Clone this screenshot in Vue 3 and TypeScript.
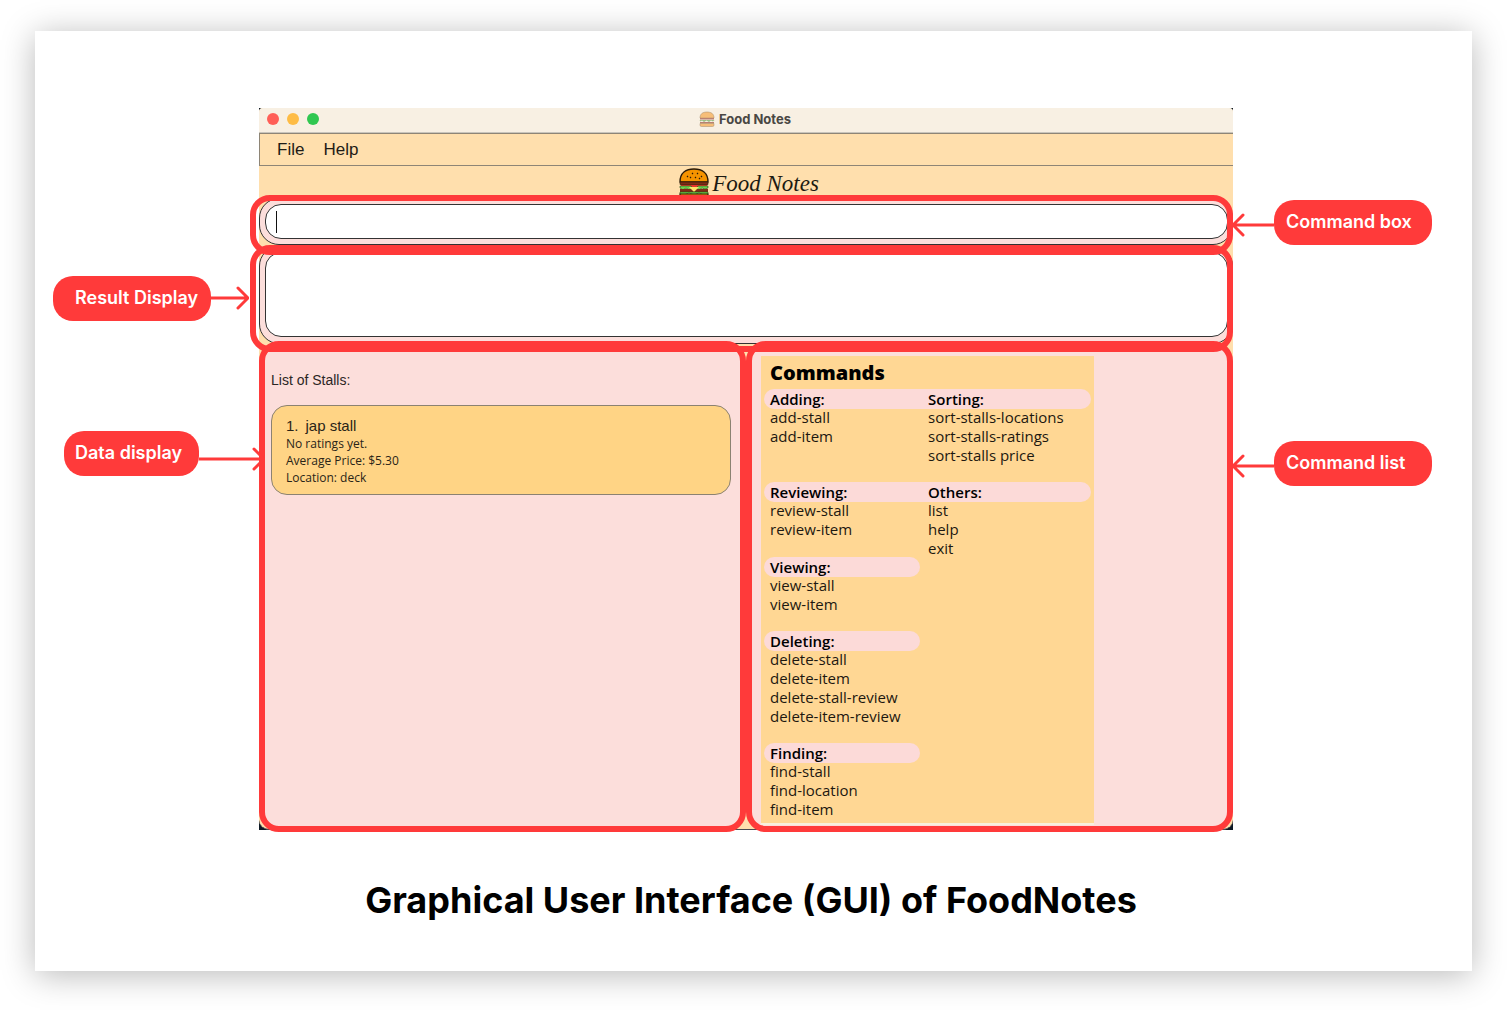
<script setup lang="ts">
import { ref } from 'vue'

interface CommandGroup {
  title: string
  items: string[]
  wide?: boolean
  column: 'first' | 'second'
}

interface Stall {
  name: string
  rating: string
  price: string
  location: string
}

const command = ref('')
const result = ref('')

const stalls: Stall[] = [
  { name: 'jap stall', rating: 'No ratings yet.', price: '$5.30', location: 'deck' },
]

const groups: CommandGroup[] = [
  { title: 'Adding:', items: ['add-stall', 'add-item'], wide: true, column: 'first' },
  {
    title: 'Sorting:',
    items: ['sort-stalls-locations', 'sort-stalls-ratings', 'sort-stalls price'],
    wide: true,
    column: 'second',
  },
  { title: 'Reviewing:', items: ['review-stall', 'review-item'], wide: true, column: 'first' },
  { title: 'Others:', items: ['list', 'help', 'exit'], wide: true, column: 'second' },
  { title: 'Viewing:', items: ['view-stall', 'view-item'], column: 'first' },
  {
    title: 'Deleting:',
    items: ['delete-stall', 'delete-item', 'delete-stall-review', 'delete-item-review'],
    column: 'first',
  },
  { title: 'Finding:', items: ['find-stall', 'find-location', 'find-item'], column: 'first' },
]
</script>

<template>
  <main class="sheet">
    <div class="diagram">
      <aside class="side side-left">
        <div class="callout callout-result">
          <span class="tag tag-result">Result Display</span>
          <svg class="arrow" width="38" height="24" viewBox="0 0 38 24">
            <path d="M0 12H36M27 2L37 12L27 22" />
          </svg>
        </div>
        <div class="callout callout-data">
          <span class="tag tag-data">Data display</span>
          <svg class="arrow arrow-low" width="66" height="24" viewBox="0 0 66 24">
            <path d="M0 12H64M55 2L65 12L55 22" />
          </svg>
        </div>
      </aside>

      <div class="backdrop">
        <div class="window">
          <header class="titlebar">
            <span class="light red"></span>
            <span class="light amber"></span>
            <span class="light green"></span>
            <div class="window-title">
              <svg width="16" height="16" viewBox="0 0 32 32" class="mini-burger">
                <path d="M2 14C2 6 7 2 16 2S30 6 30 14Z" fill="#f7ae55" stroke="#8a6a44" stroke-width="1" />
                <rect x="2" y="14" width="28" height="3" fill="#a65d4c" />
                <path d="M1 18H31L28 21L24 19L20 22L15 19L10 22L6 19L3 21Z" fill="#7fae66" />
                <rect x="2" y="22" width="28" height="3" fill="#a65d4c" />
                <path d="M2 25H30V28Q30 31 27 31H5Q2 31 2 28Z" fill="#f7ae55" stroke="#8a6a44" stroke-width="1" />
              </svg>
              <span>Food Notes</span>
            </div>
          </header>

          <nav class="menubar">
            <button type="button">File</button>
            <button type="button">Help</button>
          </nav>

          <div class="brand">
            <svg width="30" height="32" viewBox="0 0 30 32">
              <path d="M1 14C1 5 7 1 15 1S29 5 29 14Z" fill="#f59300" stroke="#2a1a08" stroke-width="1.4" />
              <path d="M8 8l1 1M13 5l1 1M18 6l1 -1M22 8l1 1M16 9l1 1M11 10l1 -1M20 10l1 1" stroke="#2a1a08" stroke-width="1.2" />
              <rect x="1" y="14" width="28" height="3" rx="1" fill="#7c2c16" stroke="#2a1a08" stroke-width=".6" />
              <path d="M2 17H28V19H2Z" fill="#e8342c" />
              <path d="M1 18H12L15 22L19 18H29V20L26 21L23 20L20 22H10L7 20L4 22L1 20Z" fill="#6fd04a" stroke="#1f4d16" stroke-width=".6" />
              <rect x="1" y="21" width="28" height="3" fill="#7c2c16" />
              <path d="M10 19H20L15 24Z" fill="#ffe06a" />
              <path d="M1 24H29V26L25 27L20 25L15 27L10 25L5 27L1 26Z" fill="#6fd04a" stroke="#1f4d16" stroke-width=".6" />
              <path d="M1 26H29V29Q29 31 26 31H4Q1 31 1 29Z" fill="#f59300" stroke="#2a1a08" stroke-width="1.2" />
            </svg>
            <span class="brand-name">Food Notes</span>
          </div>

          <section class="pane command-pane">
            <input v-model="command" type="text" class="field" aria-label="Command box" />
            <span class="caret"></span>
            <span class="frame frame-command"></span>
          </section>

          <section class="pane result-pane">
            <textarea v-model="result" class="field" readonly aria-label="Result display"></textarea>
            <span class="frame frame-result"></span>
          </section>

          <div class="columns">
            <section class="pane data-pane">
              <h2 class="list-title">List of Stalls:</h2>
              <ol class="stalls">
                <li v-for="(stall, i) in stalls" :key="stall.name" class="stall">
                  <h3><span>{{ i + 1 }}.</span><span>{{ stall.name }}</span></h3>
                  <p>{{ stall.rating }}</p>
                  <p>Average Price: {{ stall.price }}</p>
                  <p>Location: {{ stall.location }}</p>
                </li>
              </ol>
              <span class="frame frame-data"></span>
            </section>

            <section class="pane list-pane">
              <div class="commands">
                <h2>Commands</h2>
                <div class="groups">
                  <section
                    v-for="group in groups"
                    :key="group.title"
                    class="group"
                    :class="[group.column, { wide: group.wide }]"
                  >
                    <h3>{{ group.title }}</h3>
                    <ul>
                      <li v-for="item in group.items" :key="item">{{ item }}</li>
                    </ul>
                  </section>
                </div>
              </div>
              <span class="frame frame-list"></span>
            </section>
          </div>
        </div>
      </div>

      <aside class="side side-right">
        <div class="callout callout-box">
          <svg class="arrow" width="42" height="24" viewBox="0 0 42 24">
            <path d="M42 12H2M11 2L1 12L11 22" />
          </svg>
          <span class="tag tag-command">Command box</span>
        </div>
        <div class="callout callout-list">
          <svg class="arrow" width="42" height="24" viewBox="0 0 42 24">
            <path d="M42 12H2M11 2L1 12L11 22" />
          </svg>
          <span class="tag tag-command">Command list</span>
        </div>
      </aside>
    </div>

    <h1>Graphical User Interface (GUI) of FoodNotes</h1>
  </main>
</template>

<style>
body {
  background: #fff;
}
</style>

<style scoped>
* {
  box-sizing: border-box;
  margin: 0;
  padding: 0;
}

.sheet {
  margin: 31px 35px 39px;
  padding: 77px 0 47px;
  background: #fff;
  box-shadow: 0 4px 32px rgba(0, 0, 0, 0.28);
  font-family: Inter, "Liberation Sans", sans-serif;
  color: #000;
}

.diagram {
  display: grid;
  grid-template-columns: 224px minmax(0, 1fr) 239px;
}

h1 {
  margin-top: 46px;
  padding-right: 5px;
  font-size: 36px;
  line-height: 48px;
  font-weight: 700;
  text-align: center;
}

/* Callouts */
.side {
  display: flex;
  flex-direction: column;
  align-items: flex-start;
  position: relative;
  z-index: 2;
}

.side-left {
  padding: 168px 0 0 18px;
  gap: 110px;
}

.callout-data {
  margin-left: 11px;
}

.side-right {
  padding-top: 92px;
  gap: 196px;
}

.side-right .callout {
  margin-left: -1px;
}

.callout {
  display: flex;
  align-items: flex-start;
}

.side-left .callout {
  margin-right: -10px;
}

.tag {
  height: 45px;
  padding: 0 12px;
  border-radius: 20px;
  background: #ff3a3a;
  color: #fff;
  font-size: 18px;
  line-height: 44px;
  font-weight: 600;
  white-space: nowrap;
}

.tag-result {
  width: 158px;
  padding-left: 22px;
}

.tag-data {
  width: 135px;
  padding-left: 11px;
}

.tag-command {
  width: 158px;
}

.arrow {
  flex: none;
  margin-top: 10px;
  fill: none;
  stroke: #ff3a3a;
  stroke-width: 3;
  stroke-linecap: round;
}

.side-right .arrow {
  margin-top: 13px;
}

.arrow-low {
  margin-top: 16px;
}

/* Application window */
.backdrop {
  background: #0d1824;
}

.window {
  border-bottom: 1px solid #4b4a50;
  border-radius: 4px 4px 10px 10px;
  background: #ffdfad;
}

.titlebar {
  position: relative;
  display: flex;
  align-items: center;
  gap: 8px;
  height: 25px;
  padding: 0 8px 3px;
  border-bottom: 1px solid #c9c5bc;
  border-radius: 4px 4px 0 0;
  background: #f8f0e3;
}

.light {
  width: 12px;
  height: 12px;
  border-radius: 50%;
}

.red {
  background: #ff5f57;
}

.amber {
  background: #febc45;
}

.green {
  background: #30c750;
}

.window-title {
  position: absolute;
  inset: 0;
  display: flex;
  align-items: center;
  justify-content: center;
  gap: 4px;
  padding-bottom: 3px;
  padding-right: 2px;
  color: #4a4743;
  font-size: 13px;
  line-height: 16px;
  font-weight: 700;
}

.mini-burger {
  opacity: 0.75;
}

.menubar {
  display: flex;
  gap: 19px;
  height: 33px;
  padding: 0 17px;
  border: 1px solid #8e8576;
  border-right: 0;
}

.menubar button {
  border: 0;
  background: none;
  color: #1e1b16;
  font: 400 17px/30px "Liberation Sans", Arial, sans-serif;
}

.brand {
  display: flex;
  align-items: center;
  justify-content: center;
  gap: 3px;
  height: 32px;
  padding-top: 4px;
  padding-left: 6px;
}

.brand-name {
  color: #1c1a12;
  font: italic 400 23px/28px "Liberation Serif", serif;
}

.pane {
  position: relative;
  border: 1px solid #333;
  border-radius: 20px;
  background: #fcdedb;
}

.command-pane {
  height: 47px;
  padding: 5px 4px 5px 5px;
}

.result-pane {
  height: 98px;
  margin-top: 1px;
  padding: 5px 4px 6px 5px;
}

.field {
  display: block;
  width: 100%;
  height: 100%;
  padding: 0 11px;
  border: 1px solid #333;
  border-radius: 16px;
  outline: 0;
  resize: none;
  background: #fff;
  font: 16px/20px "Open Sans", sans-serif;
}

.caret {
  position: absolute;
  left: 16px;
  top: 12px;
  width: 1px;
  height: 22px;
  background: #111;
}

.columns {
  display: grid;
  grid-template-columns: 1fr 1fr;
  gap: 6px;
  margin-top: 1px;
}

/* Red outlines laid over each area */
.frame {
  position: absolute;
  z-index: 1;
  border: 6px solid #ff3a3a;
  border-radius: 20px;
  pointer-events: none;
}

.frame-command {
  inset: -4px -1px -11px -10px;
}

.frame-result {
  inset: -2px -1px -9px -10px;
}

.frame-data {
  inset: -4px -3px -3px 0;
}

.frame-list {
  inset: -4px 0 -3px -3px;
}

/* Stall list */
.data-pane,
.list-pane {
  border: 0;
}

.data-pane {
  padding: 25px 12px;
}

.list-title {
  color: #2b2624;
  font: 400 14px/20px "Liberation Sans", Arial, sans-serif;
}

.stalls {
  margin-top: 15px;
  list-style: none;
}

.stall {
  height: 90px;
  padding: 10px 14px;
  border: 1px solid #8b8272;
  border-radius: 16px;
  background: #ffd485;
  color: #2a2417;
}

.stall h3 {
  display: flex;
  gap: 7px;
  font: 400 15px/19px "Liberation Sans", Arial, sans-serif;
}

.stall p {
  font: 400 12px/17px "Open Sans", sans-serif;
}

/* Command reference */
.list-pane {
  padding: 11px 12px 4px;
}

.commands {
  width: 333px;
  height: 469px;
  padding: 5px 3px;
  border-bottom: 2px solid #f8efdc;
  background: #ffd794;
  font-family: "Open Sans", sans-serif;
}

.commands h2 {
  padding-left: 6px;
  font-size: 20px;
  line-height: 24px;
  font-weight: 800;
}

.groups {
  display: grid;
  grid-template-columns: 158px 1fr;
  margin-top: 5px;
  font-size: 15px;
  line-height: 19px;
}

.group {
  padding-bottom: 18px;
  color: #1d1810;
}

.group.first {
  grid-column: 1;
}

.group.second {
  grid-column: 2;
}

.group.second:nth-child(4) {
  padding-bottom: 0;
}

.group h3 {
  height: 20px;
  margin: -1px 2px -1px 0;
  padding-left: 6px;
  border-radius: 10px;
  background: #fcdad8;
  color: #000;
  font-size: 15px;
  line-height: 20px;
  font-weight: 600;
}

.group.wide h3 {
  margin-right: 0;
}

.group.wide.first h3 {
  border-radius: 10px 0 0 10px;
}

.group.wide.second h3 {
  border-radius: 0 10px 10px 0;
}

.group ul {
  padding-left: 6px;
  list-style: none;
}
</style>
